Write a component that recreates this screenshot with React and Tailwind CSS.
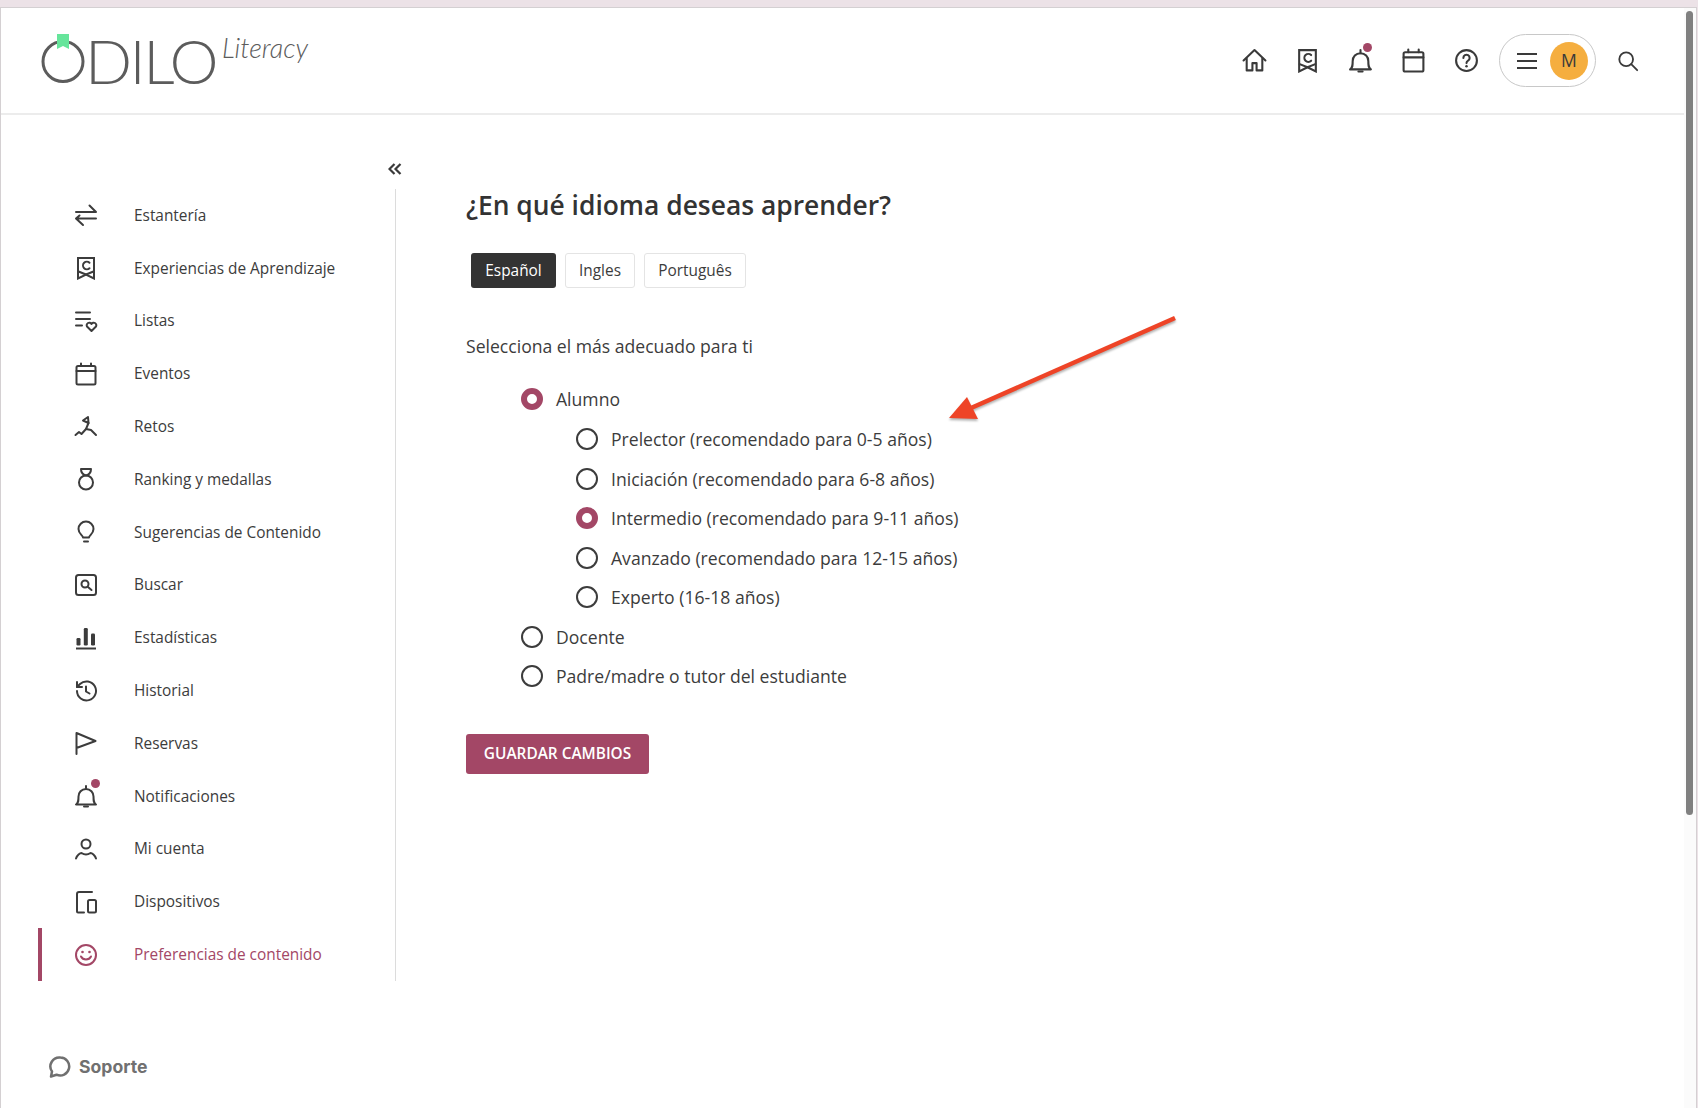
import React from 'react';

const Svg = ({ className = 'w-6 h-6', children }) => (
    <svg viewBox="0 0 24 24" fill="none" stroke="currentColor" strokeWidth="2" strokeLinecap="round" strokeLinejoin="round" className={className}>
        {children}
    </svg>
);

const Swap = (p) => (
    <Svg {...p}>
        <path d="M2 9h20L15.500 2.500" />
        <path d="M22 15.500H2l7 6.500M2 15.500l3.500-3" />
    </Svg>
);
const Bookmark = (p) => (
    <Svg {...p}>
        <path d="M4 2h16v20.500l-8-4-8 4z" strokeLinejoin="miter" />
        <path d="M15.500 6.800a3.800 3.800 0 1 0 0 5.400" />
        <path d="M4.500 15.500l7.500 3 7.500-3" />
    </Svg>
);
const Lists = (p) => (
    <Svg {...p}>
        <path d="M2 3.500h14M2 10h14M2 16.500h6" />
        <path d="M17.500 22l-4.500-4.500a2.500 2.500 0 0 1 4.500-2.500 2.500 2.500 0 0 1 4.500 2.500z" />
    </Svg>
);
const Calendar = (p) => (
    <Svg {...p}>
        <rect x="2.500" y="4" width="19" height="18.500" rx="1.500" />
        <path d="M2.500 9h19M7 1.500V4M17 1.500V4" />
    </Svg>
);
const Goals = (p) => (
    <Svg {...p}>
        <path d="M1.500 20l3.500-3 2.500 2 4.500-5 5 1 5 5" />
        <path d="M12 14l2.500-6" />
        <path d="M14.500 8L14 2l-5 3.500z" />
    </Svg>
);
const Medal = (p) => (
    <Svg {...p}>
        <circle cx="12" cy="15.500" r="7" />
        <path d="M7 2h10M7 2c0 3 1.500 5.500 5 6.500 3.500-1 5-3.500 5-6.500" />
    </Svg>
);
const Bulb = (p) => (
    <Svg {...p}>
        <path d="M9 17.500c0-2-4.500-3.500-4.500-8.500a7.500 7.500 0 0 1 15 0c0 5-4.500 6.500-4.500 8.500z" />
        <path d="M10 21.500h4" />
    </Svg>
);
const SearchBox = (p) => (
    <Svg {...p}>
        <rect x="2" y="2" width="20" height="20" rx="2.500" />
        <circle cx="11" cy="11" r="3.500" />
        <path d="M14 14l3.500 3" />
    </Svg>
);
const Stats = (p) => (
    <Svg {...p}>
        <path d="M2 22.500h20" strokeLinecap="butt" />
        <rect x="2.500" y="12" width="4" height="7.500" rx="1.200" fill="currentColor" stroke="none" />
        <rect x="9.800" y="2" width="4" height="17.500" rx="1.200" fill="currentColor" stroke="none" />
        <rect x="17" y="7.500" width="4" height="12" rx="1.200" fill="currentColor" stroke="none" />
    </Svg>
);
const History = (p) => (
    <Svg {...p}>
        <path d="M3 12a9.500 9.500 0 1 0 3-7L3 8" />
        <path d="M3 3v5h5" />
        <path d="M12 7.500v5l3.500 2" />
    </Svg>
);
const Flag = (p) => (
    <Svg {...p}>
        <path d="M2.500 23V2l19 8-19 7" />
    </Svg>
);
const Bell = (p) => (
    <Svg {...p}>
        <path d="M2 20.500h20c-2.500-1.500-2.500-4-2.500-8 0-4-3-7.500-7.500-7.500s-7.500 3.500-7.500 7.500c0 4 0 6.500-2.500 8z" />
        <path d="M12 2v3M10 22.500h4" />
    </Svg>
);
const User = (p) => (
    <Svg {...p}>
        <circle cx="12" cy="7" r="4.500" />
        <path d="M2 21.500c1-3.500 4-5.500 5.500-5.500 1.500 1 3 1.500 4.500 1.500s3-.5 4.500-1.500c1.500 0 4.500 2 5.500 5.500" />
    </Svg>
);
const Devices = (p) => (
    <Svg {...p}>
        <path d="M18 2H5a2 2 0 0 0-2 2v17.500a1 1 0 0 0 1 1h6" />
        <rect x="14" y="10" width="8" height="12.500" rx="1.500" />
    </Svg>
);
const Smile = (p) => (
    <Svg {...p}>
        <circle cx="12" cy="12" r="10" />
        <path d="M7 13.500c1 2 3 3 5 3s4-1 5-3" />
        <circle cx="8.500" cy="9" r="1.300" fill="currentColor" stroke="none" />
        <circle cx="15.500" cy="9" r="1.300" fill="currentColor" stroke="none" />
    </Svg>
);
const Home = (p) => (
    <Svg {...p}>
        <path d="M1.500 12L12 2l10.500 10" />
        <path d="M4.500 10v11.500h5.500v-7h4v7h5.500V10" />
    </Svg>
);
const Help = (p) => (
    <Svg {...p}>
        <circle cx="12" cy="12" r="10" />
        <path d="M9 9.500a3 3 0 1 1 4.500 2.600c-1 .6-1.500 1.200-1.500 2.400" />
        <circle cx="12" cy="17.500" r="1.200" fill="currentColor" stroke="none" />
    </Svg>
);
const Search = (p) => (
    <Svg {...p}>
        <circle cx="10" cy="10" r="7.500" />
        <path d="M15.500 15.500l6.500 6.500" />
    </Svg>
);

const menu = [
    ['Estantería', Swap],
    ['Experiencias de Aprendizaje', Bookmark],
    ['Listas', Lists],
    ['Eventos', Calendar],
    ['Retos', Goals],
    ['Ranking y medallas', Medal],
    ['Sugerencias de Contenido', Bulb],
    ['Buscar', SearchBox],
    ['Estadísticas', Stats],
    ['Historial', History],
    ['Reservas', Flag],
    ['Notificaciones', Bell, true],
    ['Mi cuenta', User],
    ['Dispositivos', Devices],
    ['Preferencias de contenido', Smile],
];

const Dot = ({ className }) => <span className={`absolute w-[9px] h-[9px] rounded-full bg-[#a34766] ${className}`} />;

const Radio = ({ checked, label }) => (
    <div className="flex items-center h-[39.5px]">
        {checked ? (
            <span className="w-[22px] h-[22px] rounded-full border-[6px] border-[#a34766] bg-white" />
        ) : (
            <span className="w-[22px] h-[22px] rounded-full border-[2.5px] border-[#3c3c3c] bg-white" />
        )}
        <span className="ml-[13px] text-[17.6px] text-[#3c3c3c]">{label}</span>
    </div>
);

const Header = () => (
    <header className="h-[107px] shrink-0 border-b-2 border-[#ececec] flex items-center justify-between">
        <div className="flex items-start ml-[39px] mt-[8px] text-[#5c5c5c]">
            <svg viewBox="0 0 46 50" className="w-[46px] h-[50px] mt-[-3px]">
                <circle cx="23" cy="28.500" r="20" fill="none" stroke="#5c5c5c" strokeWidth="3" />
                <path d="M17 1h12v15l-6-3-6 3z" fill="#66e59b" />
            </svg>
            <span className="ml-[-1px] mt-[-9px] text-[62px] leading-[66px] font-light tracking-[-2.5px] font-['Lato',sans-serif]">DILO</span>
            <span className="ml-[6px] mt-[-8px] text-[27px] font-light italic font-['Lato',sans-serif]">Literacy</span>
        </div>
        <div className="flex items-center mr-[57px] text-[#3a3a3a]">
            <div className="w-[53px] flex justify-center"><Home className="w-[25px] h-[25px]" /></div>
            <div className="w-[53px] flex justify-center"><Bookmark className="w-[25px] h-[25px]" /></div>
            <div className="w-[53px] flex justify-center relative"><Bell className="w-[25px] h-[25px]" /><Dot className="top-[-5px] left-[29px]" /></div>
            <div className="w-[53px] flex justify-center"><Calendar className="w-[25px] h-[25px]" /></div>
            <div className="w-[53px] flex justify-center"><Help className="w-[25px] h-[25px]" /></div>
            <div className="ml-[6px] w-[97px] h-[53px] rounded-full border border-[#c8c8c8] flex items-center pl-[17px]">
                <div className="flex flex-col gap-[5px] w-[20px]">
                    <span className="h-[2px] bg-[#3a3a3a]" />
                    <span className="h-[2px] bg-[#3a3a3a]" />
                    <span className="h-[2px] bg-[#3a3a3a]" />
                </div>
                <span className="ml-[13px] w-[38px] h-[38px] rounded-full bg-[#f5ae3f] flex items-center justify-center text-[17.6px]">M</span>
            </div>
            <div className="ml-[21px]"><Search className="w-[22px] h-[22px]" /></div>
        </div>
    </header>
);

const Sidebar = () => (
    <aside className="w-[395px] shrink-0 flex flex-col">
        <div className="h-[74px] flex items-start justify-end pt-[48px] text-[#3a3a3a]">
            <svg viewBox="0 0 14 12" fill="none" stroke="currentColor" strokeWidth="2.200" className="w-[14px] h-[12px] mr-[-6px]">
                <path d="M6.500 1L1.500 6l5 5M12.500 1l-5 5 5 5" />
            </svg>
        </div>
        <nav className="ml-[37px] border-r border-[#dcdcdc]">
            {menu.map(([label, Icon, dot], i) => {
                const active = i === menu.length - 1;
                return (
                    <div key={label} className={`h-[52.8px] flex items-center border-l-4 ${active ? 'border-[#a34766] text-[#a34766]' : 'border-transparent text-[#3c3c3c]'}`}>
                        <div className="ml-[32px] relative">
                            <Icon className="w-[24px] h-[24px]" />
                            {dot && <Dot className="top-[-5px] left-[17px]" />}
                        </div>
                        <span className="ml-[36px] text-[15.4px]">{label}</span>
                    </div>
                );
            })}
        </nav>
        <div className="mt-[73px] ml-[47px] flex items-center text-[#707070]">
            <svg viewBox="0 0 24 24" fill="none" stroke="currentColor" strokeWidth="2.500" strokeLinejoin="round" className="w-[24px] h-[24px]">
                <path d="M12.500 2.500a9 9 0 1 1-4 17.200L3 21.500l1-5a9 9 0 0 1 8.500-14z" />
            </svg>
            <span className="ml-[7px] text-[17.600px] font-bold font-['Inter',sans-serif]">Soporte</span>
        </div>
    </aside>
);

const Main = () => (
    <main className="flex-1 pl-[70px] pt-[72px] text-[#3c3c3c]">
        <h1 className="text-[26.400px] leading-[36px] font-semibold text-[#333]">¿En qué idioma deseas aprender?</h1>
        <div className="mt-[30px] ml-[5px] flex gap-[9px] text-[15.400px]">
            <button className="h-[35px] w-[85px] rounded-[3px] bg-[#333] text-white">Español</button>
            <button className="h-[35px] w-[70px] rounded-[3px] border border-[#e4e4e4]">Ingles</button>
            <button className="h-[35px] w-[102px] rounded-[3px] border border-[#e4e4e4]">Português</button>
        </div>
        <p className="mt-[46px] text-[17.600px] leading-[24px]">Selecciona el más adecuado para ti</p>
        <div className="mt-[21px] ml-[55px]">
            <Radio checked label="Alumno" />
            <div className="ml-[55px] mt-px">
                <Radio label="Prelector (recomendado para 0-5 años)" />
                <Radio label="Iniciación (recomendado para 6-8 años)" />
                <Radio checked label="Intermedio (recomendado para 9-11 años)" />
                <Radio label="Avanzado (recomendado para 12-15 años)" />
                <Radio label="Experto (16-18 años)" />
            </div>
            <Radio label="Docente" />
            <Radio label="Padre/madre o tutor del estudiante" />
        </div>
        <button className="mt-[38px] w-[183px] h-[40px] rounded-[3px] bg-[#a34766] text-white text-[15.400px] font-semibold">GUARDAR CAMBIOS</button>
    </main>
);

export default function App() {
    return (
        <div className="h-[1108px] bg-[#ece2e7] pt-[7px] pr-px overflow-hidden font-['Open_Sans',sans-serif]">
            <div className="relative h-[1101px] bg-white border-t border-x border-[#d4d0d2] flex flex-col">
                <Header />
                <div className="flex flex-1">
                    <Sidebar />
                    <Main />
                </div>
                {/* arrow annotation */}
                <svg className="absolute left-[930px] top-[292px] w-[260px] h-[140px] drop-shadow-[0_2px_1px_rgba(0,0,0,0.3)]" viewBox="0 0 260 140">
                    <path d="M244 18L40 108" stroke="#ee4427" strokeWidth="4.500" />
                    <path d="M18 118L36 97L47 119z" fill="#ee4427" />
                </svg>
                {/* scrollbar */}
                <div className="absolute right-0 top-0 bottom-0 w-[12px] bg-[#fbfbfb]">
                    <div className="absolute top-[3px] left-[2px] w-[7px] h-[804px] rounded-full bg-[#808080]" />
                </div>
            </div>
        </div>
    );
}
